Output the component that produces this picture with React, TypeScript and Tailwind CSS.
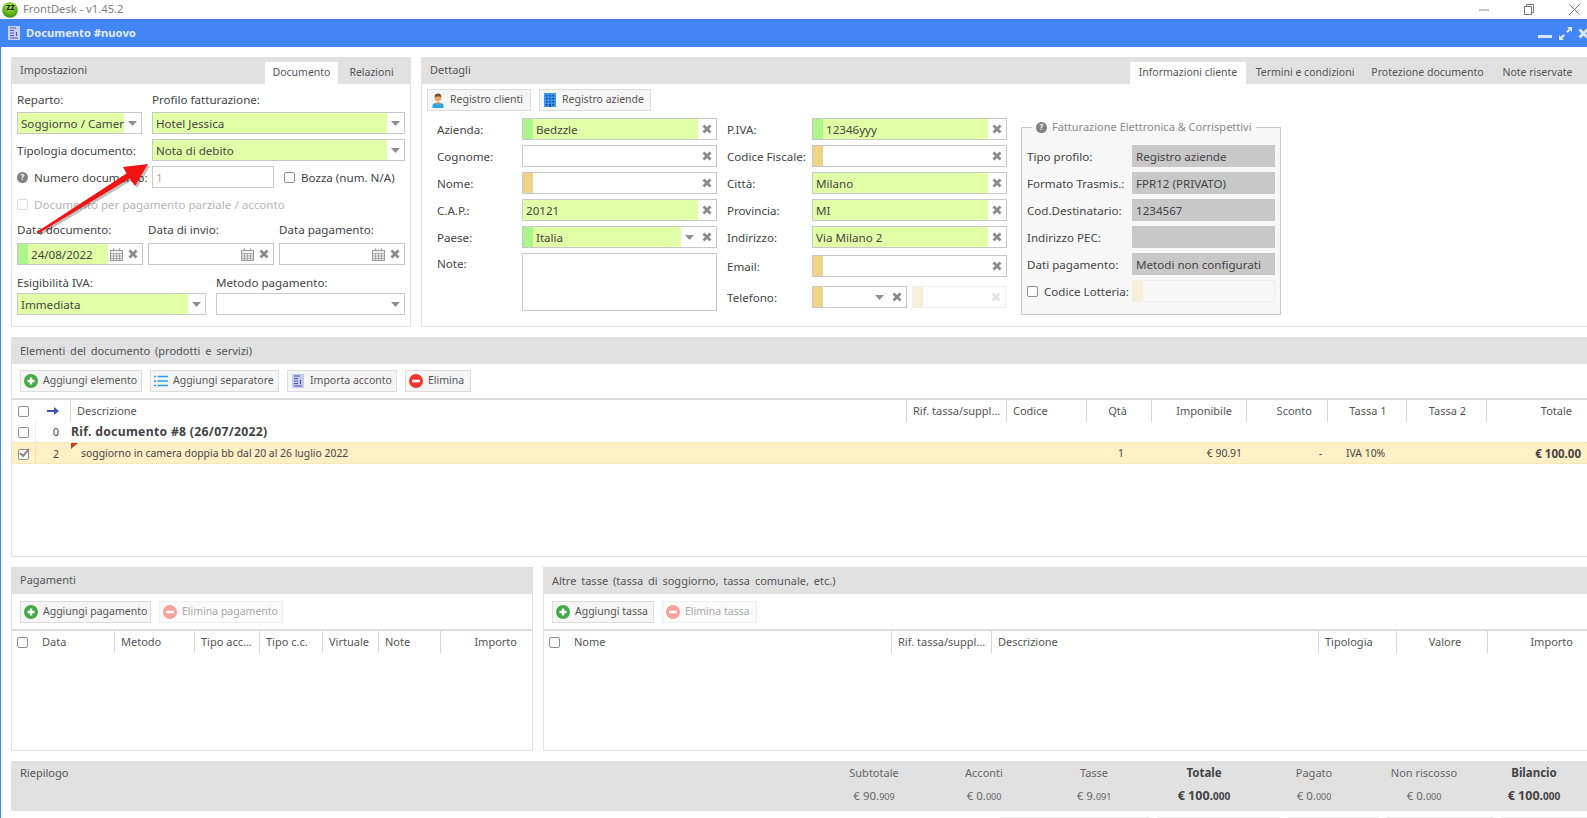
import React from "react";

const X = ({ faded }: { faded?: boolean }) => (
  <svg width="10" height="10" viewBox="0 0 10 10" className="shrink-0">
    <path d="M1.5 1.5L8.5 8.5M8.5 1.5L1.5 8.5" stroke={faded ? "#e4e4e4" : "#8a8a8a"} strokeWidth="2.8" />
  </svg>
);
const Caret = () => (
  <svg width="9" height="5" viewBox="0 0 9 5" className="shrink-0">
    <path d="M0 0H9L4.5 5Z" fill="#8f8f8f" />
  </svg>
);
const Cal = () => (
  <svg width="13" height="13" viewBox="0 0 13 13" className="shrink-0" fill="none" stroke="#9a9a9a">
    <rect x="0.5" y="2.5" width="12" height="10" fill="#f1f1f1" />
    <path d="M0.5 5.5H12.5M0.5 8H12.5M0.5 10.5H12.5M3.5 5.5V12.5M6.5 5.5V12.5M9.5 5.5V12.5" strokeWidth="0.8" />
    <path d="M3.5 0.5V3M9.5 0.5V3" strokeWidth="1.4" />
  </svg>
);
const Help = () => (
  <span className="inline-flex h-[11px] w-[11px] shrink-0 items-center justify-center rounded-full bg-[#808080] text-[8px] font-bold leading-none text-white">?</span>
);
const Check = ({ checked, faded }: { checked?: boolean; faded?: boolean }) => (
  <span className={`relative inline-block h-[11px] w-[11px] shrink-0 rounded-[2px] border ${faded ? "border-[#dcdcdc]" : "border-[#8f8f8f]"} bg-white`}>
    {checked && (
      <svg width="13" height="11" viewBox="0 0 13 11" className="absolute left-[-1px] top-[-2px]">
        <path d="M2 5L5 8L11 1" stroke="#8a8a8a" strokeWidth="2" fill="none" />
      </svg>
    )}
  </span>
);
const Plus = () => (
  <svg width="14" height="14" viewBox="0 0 14 14" className="shrink-0">
    <circle cx="7" cy="7" r="7" fill="#43a947" />
    <path d="M7 3.5V10.5M3.5 7H10.5" stroke="#fff" strokeWidth="2.4" />
  </svg>
);
const Minus = () => (
  <svg width="14" height="14" viewBox="0 0 14 14" className="shrink-0">
    <circle cx="7" cy="7" r="7" fill="#f1362d" />
    <path d="M3.2 7H10.8" stroke="#fff" strokeWidth="2.6" />
  </svg>
);
const ListIcon = () => (
  <svg width="14" height="12" viewBox="0 0 14 12" className="shrink-0">
    <path d="M0 1.5H2M0 6H2M0 10.5H2M3.5 1.5H14M3.5 6H14M3.5 10.5H14" stroke="#2f9bf0" strokeWidth="1.4" />
  </svg>
);
const DocIcon = ({ light }: { light?: boolean }) => (
  <svg width="12" height="14" viewBox="0 0 12 14" className="shrink-0">
    <rect width="12" height="14" fill={light ? "#c9cff0" : "#c5cae9"} />
    <path d="M2 2H8M2 4.5H6M2 7H6M2 9.5H6M2 12H10M8.5 6V10" stroke="#4a5ab5" strokeWidth="1.2" />
  </svg>
);
const Person = () => (
  <svg width="12" height="15" viewBox="0 0 12 15" className="shrink-0">
    <path d="M0.5 15V12.5C0.5 10.5 3 10 6 10S11.5 10.5 11.5 12.5V15Z" fill="#29a5e8" />
    <circle cx="6" cy="5" r="3.3" fill="#f0a35e" />
    <path d="M2.6 4.5C2.6 1.5 4 .6 6 .6S9.4 1.5 9.4 4.5C8 3.2 4 3.2 2.6 4.5Z" fill="#7a4a20" />
    <path d="M4.5 9H7.5V11L6 12L4.5 11Z" fill="#e4914a" />
  </svg>
);
const Building = () => (
  <svg width="12" height="14" viewBox="0 0 12 14" className="shrink-0">
    <rect width="12" height="14" fill="#3b97ee" />
    <path d="M2 2H3.5V3.5H2ZM5.2 2H6.7V3.5H5.2ZM8.4 2H10V3.5H8.4ZM2 5H3.5V6.5H2ZM5.2 5H6.7V6.5H5.2ZM8.4 5H10V6.5H8.4ZM2 8H3.5V9.5H2ZM5.2 8H6.7V9.5H5.2ZM8.4 8H10V9.5H8.4ZM2 11H3.5V12.5H2ZM5.2 11H6.7V14H5.2ZM8.4 11H10V12.5H8.4Z" fill="#0d3f8f" />
  </svg>
);

type FieldProps = {
  value?: string;
  w: string;
  fill?: boolean;
  marker?: "green" | "orange";
  caret?: boolean;
  clear?: boolean;
  faded?: boolean;
  date?: boolean;
};
const Field = ({ value, w, fill, marker, caret, clear, faded, date }: FieldProps) => (
  <div className={`flex h-[22px] shrink-0 border ${faded ? "border-[#eeeeee]" : "border-[#c8c8c8]"} bg-white ${w}`}>
    {marker === "green" && <span className="w-[10px] shrink-0 bg-[#abf58b]" />}
    {marker === "orange" && <span className={`w-[10px] shrink-0 ${faded ? "bg-[#f8efd8]" : "bg-[#efd387]"}`} />}
    <div className={`flex min-w-0 flex-1 items-center overflow-hidden whitespace-nowrap pl-[3px] pt-[1px] ${fill ? "bg-[#e1ffa6]" : ""}`}>{value}</div>
    {date && <span className="flex w-[16px] shrink-0 items-center justify-center"><Cal /></span>}
    {caret && <span className="flex w-[17px] shrink-0 items-center justify-center"><Caret /></span>}
    {clear && <span className="flex w-[18px] shrink-0 items-center justify-center"><X faded={faded} /></span>}
  </div>
);

const Btn = ({ icon, label, w, off }: { icon: React.ReactNode; label: string; w: string; off?: boolean }) => (
  <div className={`flex h-[22px] shrink-0 items-center gap-[5px] border pl-[3px] text-[10.5px] ${off ? "border-[#efefef] bg-[#fafafa] text-[#aaaaaa]" : "border-[#dddddd] bg-[#f5f5f5] text-[#555555]"} ${w}`}>
    <span className={`flex w-[14px] shrink-0 justify-center ${off ? "opacity-45" : ""}`}>{icon}</span>
    <span className="whitespace-nowrap">{label}</span>
  </div>
);

const Row = ({ label, children, lw }: { label: string; children: React.ReactNode; lw: string }) => (
  <div className="flex h-[22px] items-center">
    <span className={`shrink-0 whitespace-nowrap pt-[1px] ${lw}`}>{label}</span>
    {children}
  </div>
);

const Head = ({ title, children, wide }: { title: string; children?: React.ReactNode; wide?: boolean }) => (
  <div className="flex h-[27px] shrink-0 items-center justify-between bg-[#e1e1e1] text-[11px] text-[#555555]">
    <span className={`whitespace-nowrap pl-[8px] ${wide ? "pt-[1px] [word-spacing:2px]" : ""}`}>{title}</span>
    {children}
  </div>
);

const HCell = ({ w, children, cls }: { w: string; children?: React.ReactNode; cls?: string }) => (
  <div className={`flex h-[22px] shrink-0 items-center overflow-hidden whitespace-nowrap border-r border-[#d8d8d8] pl-[6px] ${w} ${cls ?? ""}`}>{children}</div>
);

const Sum = ({ title, main, dec, bold }: { title: string; main: string; dec: string; bold?: boolean }) => (
  <div className="flex w-[110px] shrink-0 flex-col items-center">
    <span className={`h-[23px] leading-[23px] ${bold ? "text-[11.5px] font-bold text-[#444444]" : "text-[#666666]"}`}>{title}</span>
    <span className={`h-[23px] leading-[23px] ${bold ? "text-[12.5px] font-bold text-[#444444]" : "text-[11.5px] text-[#666666]"}`}>
      {main}
      <span className={bold ? "text-[10px]" : "text-[9px]"}>{dec}</span>
    </span>
  </div>
);

export default function App() {
  return (
    <div className="relative h-[818px] w-[1587px] overflow-hidden bg-white font-['Noto_Sans',sans-serif] text-[11px] text-[#555555]">
      {/* window title */}
      <div className="flex h-[19px] items-center">
        <svg width="16" height="16" viewBox="0 0 16 16" className="ml-[2px] shrink-0">
          <defs>
            <radialGradient id="ball" cx="0.5" cy="0.3" r="0.75">
              <stop offset="0" stopColor="#b6ea2e" />
              <stop offset="0.6" stopColor="#5fb81c" />
              <stop offset="1" stopColor="#2c7d10" />
            </radialGradient>
          </defs>
          <circle cx="8" cy="8" r="7.8" fill="url(#ball)" />
          <text x="4.5" y="8" fontSize="8" fontWeight="700" fill="#101010">zz</text>
        </svg>
        <span className="ml-[5px] w-[107px] shrink-0 whitespace-nowrap text-[11.2px] text-[#808080]">FrontDesk - v1.45.2</span>
        <svg width="10" height="2" viewBox="0 0 10 2" className="ml-[1349px] shrink-0">
          <path d="M0 1H10" stroke="#888888" />
        </svg>
        <svg width="10" height="11" viewBox="0 0 10 11" className="ml-[35px] shrink-0" fill="none" stroke="#777777">
          <rect x="0.5" y="2.5" width="7" height="8" />
          <path d="M2.5 2.5V0.5H9.5V8.5H7.5" />
        </svg>
        <svg width="11" height="11" viewBox="0 0 11 11" className="ml-[35px] shrink-0">
          <path d="M0.5 0.5L10.5 10.5M10.5 0.5L0.5 10.5" stroke="#777777" />
        </svg>
      </div>

      <div className="h-[799px] w-[1620px] border-l border-[#4285f4]">
        {/* blue bar */}
        <div className="flex h-[28px] items-center bg-[#4285f4] pl-[7px]">
          <DocIcon light />
          <span className="ml-[6px] w-[116px] shrink-0 whitespace-nowrap text-[11.2px] font-bold text-[#e3edff]">Documento #nuovo</span>
          <span className="ml-[1396px] h-[3px] w-[14px] shrink-0 translate-y-[3px] bg-[#dbe7fd]" />
          <svg width="15" height="15" viewBox="0 0 15 15" className="ml-[6px] shrink-0">
            <path d="M9 1H14V6L12.3 4.3L9.5 7L8 5.5L10.7 2.7ZM6 14H1V9L2.7 10.7L5.5 8L7 9.5L4.3 12.3Z" fill="#dbe7fd" />
          </svg>
          <span className="ml-[5px] flex shrink-0"><svg width="11" height="11" viewBox="0 0 11 11"><path d="M1.5 1.5L9.5 9.5M9.5 1.5L1.5 9.5" stroke="#dbe7fd" strokeWidth="3" /></svg></span>
        </div>

        <div className="flex flex-col pl-[10px] pt-[10px]">
          {/* row 1 */}
          <div className="flex h-[270px] shrink-0 gap-[10px]">
            <section className="flex w-[400px] shrink-0 flex-col border border-t-0 border-[#e1e1e1] text-[11.6px]">
              <Head title="Impostazioni">
                <div className="flex h-full items-end pr-[5px] text-[10.5px]">
                  <span className="flex h-[22px] w-[73px] items-center justify-center bg-white">Documento</span>
                  <span className="flex h-[22px] w-[67px] items-center justify-center">Relazioni</span>
                </div>
              </Head>
              <div className="flex flex-col px-[5px] text-[#444444]">
                <div className="mb-[2px] mt-[6px] flex h-[20px] items-center">
                  <span className="w-[135px] shrink-0">Reparto:</span>
                  <span>Profilo fatturazione:</span>
                </div>
                <div className="flex gap-[10px]">
                  <Field w="w-[125px]" fill value="Soggiorno / Camera" caret />
                  <Field w="w-[253px]" fill value="Hotel Jessica" caret />
                </div>
                <div className="mt-[5px] flex h-[22px] items-center">
                  <span className="w-[135px] shrink-0 pt-[1px]">Tipologia documento:</span>
                  <Field w="w-[253px]" fill value="Nota di debito" caret />
                </div>
                <div className="mt-[5px] flex h-[22px] items-center">
                  <Help />
                  <span className="ml-[6px] w-[118px] shrink-0 whitespace-nowrap pt-[1px]">Numero documento:</span>
                  <div className="flex h-[22px] w-[122px] shrink-0 items-center border border-[#c8c8c8] pl-[3px] pt-[1px] text-[#aaaaaa]">1</div>
                  <span className="ml-[10px] flex"><Check /></span>
                  <span className="ml-[6px] whitespace-nowrap pt-[1px]">Bozza (num. N/A)</span>
                </div>
                <div className="mt-[5px] flex h-[22px] items-center text-[#b5b5b5]">
                  <Check faded />
                  <span className="ml-[6px] whitespace-nowrap pt-[1px]">Documento per pagamento parziale / acconto</span>
                </div>
                <div className="mb-[3px] mt-[5px] flex h-[20px] items-center">
                  <span className="w-[131px] shrink-0">Data documento:</span>
                  <span className="w-[131px] shrink-0">Data di invio:</span>
                  <span>Data pagamento:</span>
                </div>
                <div className="flex gap-[5px]">
                  <Field w="w-[126px]" fill marker="green" value="24/08/2022" date clear />
                  <Field w="w-[126px]" date clear />
                  <Field w="w-[126px]" date clear />
                </div>
                <div className="mt-[7px] flex h-[21px] items-center">
                  <span className="w-[199px] shrink-0">Esigibilità IVA:</span>
                  <span>Metodo pagamento:</span>
                </div>
                <div className="flex gap-[10px]">
                  <Field w="w-[189px]" fill value="Immediata" caret />
                  <Field w="w-[189px]" caret />
                </div>
              </div>
            </section>

            <section className="flex flex-1 flex-col border border-t-0 border-[#e1e1e1] text-[11.6px]">
              <Head title="Dettagli">
                <div className="mr-[35px] flex h-full items-end text-[10.5px]">
                  <span className="flex h-[22px] w-[116px] items-center justify-center bg-white">Informazioni cliente</span>
                  <span className="flex h-[22px] w-[118px] items-center justify-center">Termini e condizioni</span>
                  <span className="flex h-[22px] w-[127px] items-center justify-center">Protezione documento</span>
                  <span className="flex h-[22px] w-[93px] items-center justify-center">Note riservate</span>
                </div>
              </Head>
              <div className="mt-[5px] flex gap-[8px] pl-[5px]">
                <Btn w="w-[104px]" icon={<Person />} label="Registro clienti" />
                <Btn w="w-[112px]" icon={<Building />} label="Registro aziende" />
              </div>
              <div className="flex text-[#444444]">
                <div className="ml-[15px] mt-[7px] flex w-[280px] shrink-0 flex-col gap-[5px]">
                  <Row label="Azienda:" lw="w-[85px]"><Field w="w-[195px]" fill marker="green" value="Bedzzle" clear /></Row>
                  <Row label="Cognome:" lw="w-[85px]"><Field w="w-[195px]" clear /></Row>
                  <Row label="Nome:" lw="w-[85px]"><Field w="w-[195px]" marker="orange" clear /></Row>
                  <Row label="C.A.P.:" lw="w-[85px]"><Field w="w-[195px]" fill value="20121" clear /></Row>
                  <Row label="Paese:" lw="w-[85px]"><Field w="w-[195px]" fill marker="green" value="Italia" caret clear /></Row>
                  <div className="flex">
                    <span className="mt-[2px] w-[85px] shrink-0">Note:</span>
                    <div className="h-[58px] w-[195px] border border-[#c8c8c8]" />
                  </div>
                </div>
                <div className="ml-[10px] mt-[7px] flex w-[280px] shrink-0 flex-col gap-[5px]">
                  <Row label="P.IVA:" lw="w-[85px]"><Field w="w-[195px]" fill marker="green" value="12346yyy" clear /></Row>
                  <Row label="Codice Fiscale:" lw="w-[85px]"><Field w="w-[195px]" marker="orange" clear /></Row>
                  <Row label="Città:" lw="w-[85px]"><Field w="w-[195px]" fill value="Milano" clear /></Row>
                  <Row label="Provincia:" lw="w-[85px]"><Field w="w-[195px]" fill value="MI" clear /></Row>
                  <Row label="Indirizzo:" lw="w-[85px]"><Field w="w-[195px]" fill value="Via Milano 2" clear /></Row>
                  <div className="mt-[2px]">
                    <Row label="Email:" lw="w-[85px]"><Field w="w-[195px]" marker="orange" clear /></Row>
                  </div>
                  <div className="mt-[4px]">
                    <Row label="Telefono:" lw="w-[85px]">
                      <Field w="w-[95px]" marker="orange" caret clear />
                      <span className="ml-[5px]"><Field w="w-[94px]" marker="orange" faded clear /></span>
                    </Row>
                  </div>
                </div>
                <fieldset className="ml-[14px] mt-[9px] h-[195px] w-[260px] shrink-0 border border-[#c8c8c8] bg-[#f7f7f7] px-[5px]">
                  <legend className="ml-[5px] flex h-[14px] items-center px-[4px] text-[#8a8a8a]">
                    <Help />
                    <span className="ml-[5px] whitespace-nowrap text-[11px]">Fatturazione Elettronica &amp; Corrispettivi</span>
                  </legend>
                  <div className="mt-[11px] flex flex-col gap-[5px]">
                    {[
                      ["Tipo profilo:", "Registro aziende"],
                      ["Formato Trasmis.:", "FPR12 (PRIVATO)"],
                      ["Cod.Destinatario:", "1234567"],
                      ["Indirizzo PEC:", ""],
                      ["Dati pagamento:", "Metodi non configurati"],
                    ].map(([l, v]) => (
                      <Row key={l} label={l} lw="w-[105px]">
                        <div className="flex h-[22px] w-[143px] shrink-0 items-center whitespace-nowrap bg-[#c8c8c8] pl-[4px] pt-[1px]">{v}</div>
                      </Row>
                    ))}
                    <div className="flex h-[22px] items-center">
                      <Check />
                      <span className="ml-[6px] w-[88px] shrink-0 whitespace-nowrap pt-[1px]">Codice Lotteria:</span>
                      <div className="flex h-[22px] w-[143px] shrink-0 border border-[#eeeeee]">
                        <span className="w-[10px] bg-[#f8efd8]" />
                      </div>
                    </div>
                  </div>
                </fieldset>
              </div>
            </section>
          </div>

          {/* items */}
          <section className="mt-[10px] flex h-[220px] shrink-0 flex-col border border-t-0 border-[#e1e1e1] text-[11px]">
            <Head wide title="Elementi del documento (prodotti e servizi)" />
            <div className="mt-[6px] flex gap-[8px] pl-[8px]">
              <Btn w="w-[122px]" icon={<Plus />} label="Aggiungi elemento" />
              <Btn w="w-[129px]" icon={<ListIcon />} label="Aggiungi separatore" />
              <Btn w="w-[110px]" icon={<DocIcon />} label="Importa acconto" />
              <Btn w="w-[66px]" icon={<Minus />} label="Elimina" />
            </div>
            <div className="mt-[6px] flex h-[24px] items-center border-t-2 border-[#dddddd]">
              <span className="flex w-[23px] shrink-0 justify-center"><Check /></span>
              <span className="flex h-[22px] w-[36px] shrink-0 items-center justify-center border-r border-[#d8d8d8]">
                <svg width="12" height="8" viewBox="0 0 12 8"><path d="M0 3H7V0L12 4L7 8V5H0Z" fill="#3f51b5" /></svg>
              </span>
              <HCell w="w-[836px]">Descrizione</HCell>
              <HCell w="w-[100px]">Rif. tassa/suppl...</HCell>
              <HCell w="w-[80px]">Codice</HCell>
              <HCell w="w-[65px]" cls="justify-center !pl-0 pr-[3px]">Qtà</HCell>
              <HCell w="w-[95px]" cls="justify-end pr-[14px]">Imponibile</HCell>
              <HCell w="w-[81px]" cls="justify-end pr-[15px]">Sconto</HCell>
              <HCell w="w-[79px]" cls="justify-center pr-[4px]">Tassa 1</HCell>
              <HCell w="w-[80px]" cls="justify-center pr-[4px]">Tassa 2</HCell>
              <div className="w-[85px] shrink-0 whitespace-nowrap text-right">Totale</div>
            </div>
            <div className="flex h-[20px] items-center text-[#444444]">
              <span className="flex w-[23px] shrink-0 justify-center"><Check /></span>
              <span className="h-full w-[36px] shrink-0 border-l border-[#eeeeee] pr-[12px] text-right leading-[20px]">0</span>
              <span className="whitespace-nowrap text-[12.2px] font-bold tracking-[0.3px]">Rif. documento #8 (26/07/2022)</span>
            </div>
            <div className="flex h-[22px] items-center border-y border-dotted border-[#eedfb5] bg-[#fff0c6] pt-[2px] text-[10.4px] text-[#444444]">
              <span className="flex w-[23px] shrink-0 justify-center"><Check checked /></span>
              <span className="h-full w-[36px] shrink-0 border-l border-[#eadfc0] pr-[12px] text-right leading-[18px]">2</span>
              <div className="relative flex h-full w-[836px] shrink-0 items-center pl-[10px]">
                <span className="absolute left-0 top-[-2px] h-0 w-0 border-r-[7px] border-t-[6px] border-r-transparent border-t-[#c8402a]" />
                <span className="whitespace-nowrap">soggiorno in camera doppia bb dal 20 al 26 luglio 2022</span>
              </div>
              <span className="w-[180px] shrink-0" />
              <span className="w-[65px] shrink-0 pl-[31px]">1</span>
              <span className="w-[95px] shrink-0 whitespace-nowrap pr-[5px] text-right">€ 90.91</span>
              <span className="w-[81px] shrink-0 pr-[6px] text-right">-</span>
              <span className="w-[79px] shrink-0 whitespace-nowrap pl-[18px]">IVA 10%</span>
              <span className="w-[80px] shrink-0" />
              <span className="w-[94px] shrink-0 whitespace-nowrap text-right text-[11.5px] font-bold">€ 100.00</span>
            </div>
          </section>

          {/* payments / taxes */}
          <div className="mt-[10px] flex h-[184px] shrink-0 gap-[10px] text-[11px]">
            <section className="flex w-[522px] shrink-0 flex-col border border-t-0 border-[#e1e1e1]">
              <Head title="Pagamenti" />
              <div className="mt-[7px] flex gap-[8px] pl-[8px]">
                <Btn w="w-[131px]" icon={<Plus />} label="Aggiungi pagamento" />
                <Btn w="w-[124px]" off icon={<Minus />} label="Elimina pagamento" />
              </div>
              <div className="mt-[6px] flex h-[24px] items-center border-t-2 border-[#dddddd]">
                <HCell w="w-[103px]" cls="!pl-0">
                  <span className="ml-[5px] mr-[14px] flex"><Check /></span>Data
                </HCell>
                <HCell w="w-[80px]">Metodo</HCell>
                <HCell w="w-[65px]">Tipo acc...</HCell>
                <HCell w="w-[63px]">Tipo c.c.</HCell>
                <HCell w="w-[56px]">Virtuale</HCell>
                <HCell w="w-[62px]">Note</HCell>
                <div className="w-[76px] shrink-0 whitespace-nowrap text-right">Importo</div>
              </div>
            </section>
            <section className="flex flex-1 flex-col border border-t-0 border-[#e1e1e1]">
              <Head wide title="Altre tasse (tassa di soggiorno, tassa comunale, etc.)" />
              <div className="mt-[7px] flex gap-[8px] pl-[8px]">
                <Btn w="w-[102px]" icon={<Plus />} label="Aggiungi tassa" />
                <Btn w="w-[95px]" off icon={<Minus />} label="Elimina tassa" />
              </div>
              <div className="mt-[6px] flex h-[24px] items-center border-t-2 border-[#dddddd]">
                <HCell w="w-[348px]" cls="!pl-0">
                  <span className="ml-[5px] mr-[14px] flex"><Check /></span>Nome
                </HCell>
                <HCell w="w-[100px]">Rif. tassa/suppl...</HCell>
                <HCell w="w-[327px]">Descrizione</HCell>
                <HCell w="w-[78px]">Tipologia</HCell>
                <HCell w="w-[91px]" cls="justify-center">Valore</HCell>
                <div className="w-[85px] shrink-0 whitespace-nowrap text-right">Importo</div>
              </div>
            </section>
          </div>

          {/* summary */}
          <section className="mt-[10px] flex h-[50px] shrink-0 bg-[#e1e1e1] text-[11px]">
            <div className="w-[808px] shrink-0 pl-[9px] leading-[23px]">Riepilogo</div>
            <Sum title="Subtotale" main="€ 90." dec="909" />
            <Sum title="Acconti" main="€ 0." dec="000" />
            <Sum title="Tasse" main="€ 9." dec="091" />
            <Sum title="Totale" main="€ 100." dec="000" bold />
            <Sum title="Pagato" main="€ 0." dec="000" />
            <Sum title="Non riscosso" main="€ 0." dec="000" />
            <Sum title="Bilancio" main="€ 100." dec="000" bold />
          </section>
          <div className="mt-[6px] flex gap-[8px] pl-[989px]">
            <span className="h-[4px] w-[149px] border-t border-[#e6e6e6] bg-[#f8f8f8]" />
            <span className="h-[4px] w-[123px] border-t border-[#e6e6e6] bg-[#f8f8f8]" />
            <span className="h-[4px] w-[91px] border-t border-[#e6e6e6] bg-[#f8f8f8]" />
            <span className="h-[4px] w-[106px] border-t border-[#e6e6e6] bg-[#f8f8f8]" />
            <span className="h-[4px] w-[90px] border-t border-[#e6e6e6] bg-[#f8f8f8]" />
          </div>
        </div>
      </div>

      {/* annotation arrow over the form */}
      <svg width="150" height="90" viewBox="0 0 150 90" className="pointer-events-none absolute left-[20px] top-[158px]">
        <polygon points="17.5,73.5 106.5,15.5 103,9 128,6 115,28 109.5,20.5 18.5,75.5" fill="#000" opacity="0.25" transform="translate(2 2)" />
        <polygon points="17.5,73.5 106.5,15.5 103,9 128,6 115,28 109.5,20.5 18.5,75.5" fill="#f01414" />
      </svg>
    </div>
  );
}
